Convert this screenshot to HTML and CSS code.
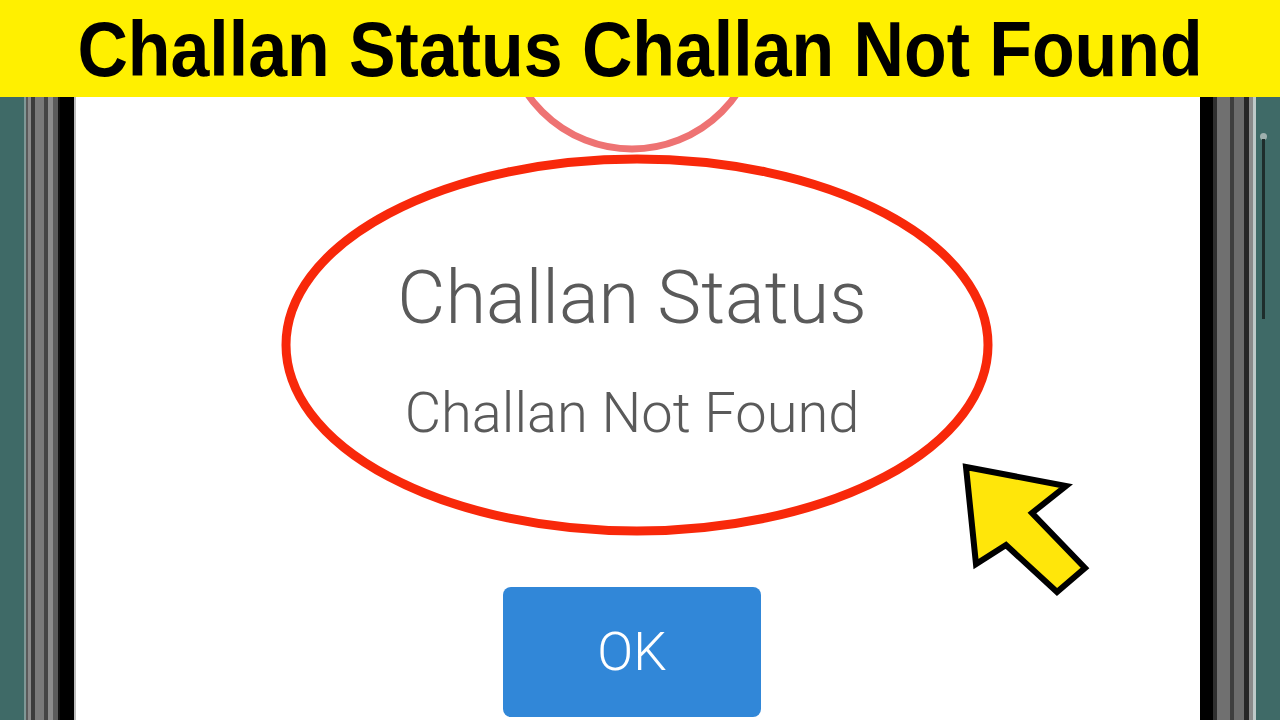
FILE: index.html
```html
<!DOCTYPE html>
<html lang="en">
<head>
<meta charset="utf-8">
<meta name="viewport" content="width=device-width,initial-scale=1">
<title>Challan Status</title>
<link rel="stylesheet" href="styles.css">
</head>
<body>
<div class="banner">
    <h1 class="banner-title">Challan Status Challan Not Found</h1>
</div>
<div class="device">
    <div class="bezel bezel-left"></div>
    <div class="screen">
        <div class="alert">
            <h2 class="alert-title">Challan Status</h2>
            <p class="alert-message">Challan Not Found</p>
            <button type="button" class="alert-button">OK</button>
        </div>
    </div>
    <div class="bezel bezel-right"><span class="side-key"></span></div>
</div>
<svg class="marks" width="1280" height="720" viewBox="0 0 1280 720">
    <circle cx="632" cy="22" r="127" fill="none" stroke="#ee7373" stroke-width="7"/>
    <ellipse cx="637" cy="345" rx="351" ry="186" fill="none" stroke="#f8280a" stroke-width="9"/>
    <polygon points="966,467 1066,486 1032,513 1085,568 1057,592 1006,545 976,564"
             fill="#ffe60a" stroke="#000" stroke-width="6" stroke-linejoin="miter"/>
</svg>
</body>
</html>
```

FILE: styles.css
```css
html {
    overflow: hidden;
}

body {
    margin: 0;
    width: 1280px;
    height: 720px;
    overflow: hidden;
    position: relative;
    background: #3f6a67;
    font-family: Roboto, "Liberation Sans", sans-serif;
}

.banner {
    position: relative;
    z-index: 2;
    height: 97px;
    background: #fff000;
    text-align: center;
}

.banner-title {
    margin: 0;
    padding-top: 2px;
    line-height: 95px;
    font-family: "Liberation Sans", Arial, sans-serif;
    font-size: 77px;
    font-weight: bold;
    color: #000;
    white-space: nowrap;
    transform: scaleX(0.907);
}

.device {
    display: flex;
    height: 623px;
}

.bezel {
    position: relative;
    flex: none;
}

.bezel-left {
    width: 76px;
    background: linear-gradient(to right,
        #3f6a67 0 24px, #7f9896 24px 26px, #5a5a5a 26px 28px, #8a8a8a 28px 31px,
        #3c3c3c 31px 35px, #7a7a7a 35px 44px, #454545 44px 48px, #8c8c8c 48px 53px,
        #5c5c5c 53px 58px, #111 58px 60px, #000 60px 74px, #bdbdbd 74px 76px);
}

.bezel-right {
    width: 80px;
    background: linear-gradient(to right,
        #000 0 13px, #2f2f2f 13px 17px, #707070 17px 30px, #3e3e3e 30px 34px,
        #6c6c6c 34px 44px, #262626 44px 49px, #8a8a8a 49px 53px, #bfcac9 53px 56px,
        #3f6a67 56px 80px);
}

/* the little volume key poking out of the right edge */
.side-key {
    position: absolute;
    left: 60px;
    top: 36px;
    width: 7px;
    height: 7px;
    border-radius: 50%;
    background: #9fb0ae;
}

.side-key::after {
    content: "";
    position: absolute;
    left: 2px;
    top: 6px;
    width: 3px;
    height: 180px;
    background: #1e2d2c;
}

.screen {
    flex: 1;
    background: #fff;
    padding-top: 164px;
}

.alert {
    display: flex;
    flex-direction: column;
    align-items: center;
    padding-right: 12px;
    color: #5a5a5a;
}

.alert-title {
    margin: 0;
    font-size: 74px;
    font-weight: 300;
    line-height: 1;
}

.alert-message {
    margin: 50px 0 0;
    font-size: 56px;
    font-weight: 300;
    line-height: 1;
}

.alert-button {
    margin-top: 146px;
    width: 258px;
    height: 130px;
    border: none;
    border-radius: 8px;
    background: #3187d8;
    color: #fff;
    font-family: Roboto, "Liberation Sans", sans-serif;
    font-size: 53px;
    font-weight: 300;
    padding: 0;
}

.marks {
    position: absolute;
    left: 0;
    top: 0;
    z-index: 1;
    pointer-events: none;
}
```
